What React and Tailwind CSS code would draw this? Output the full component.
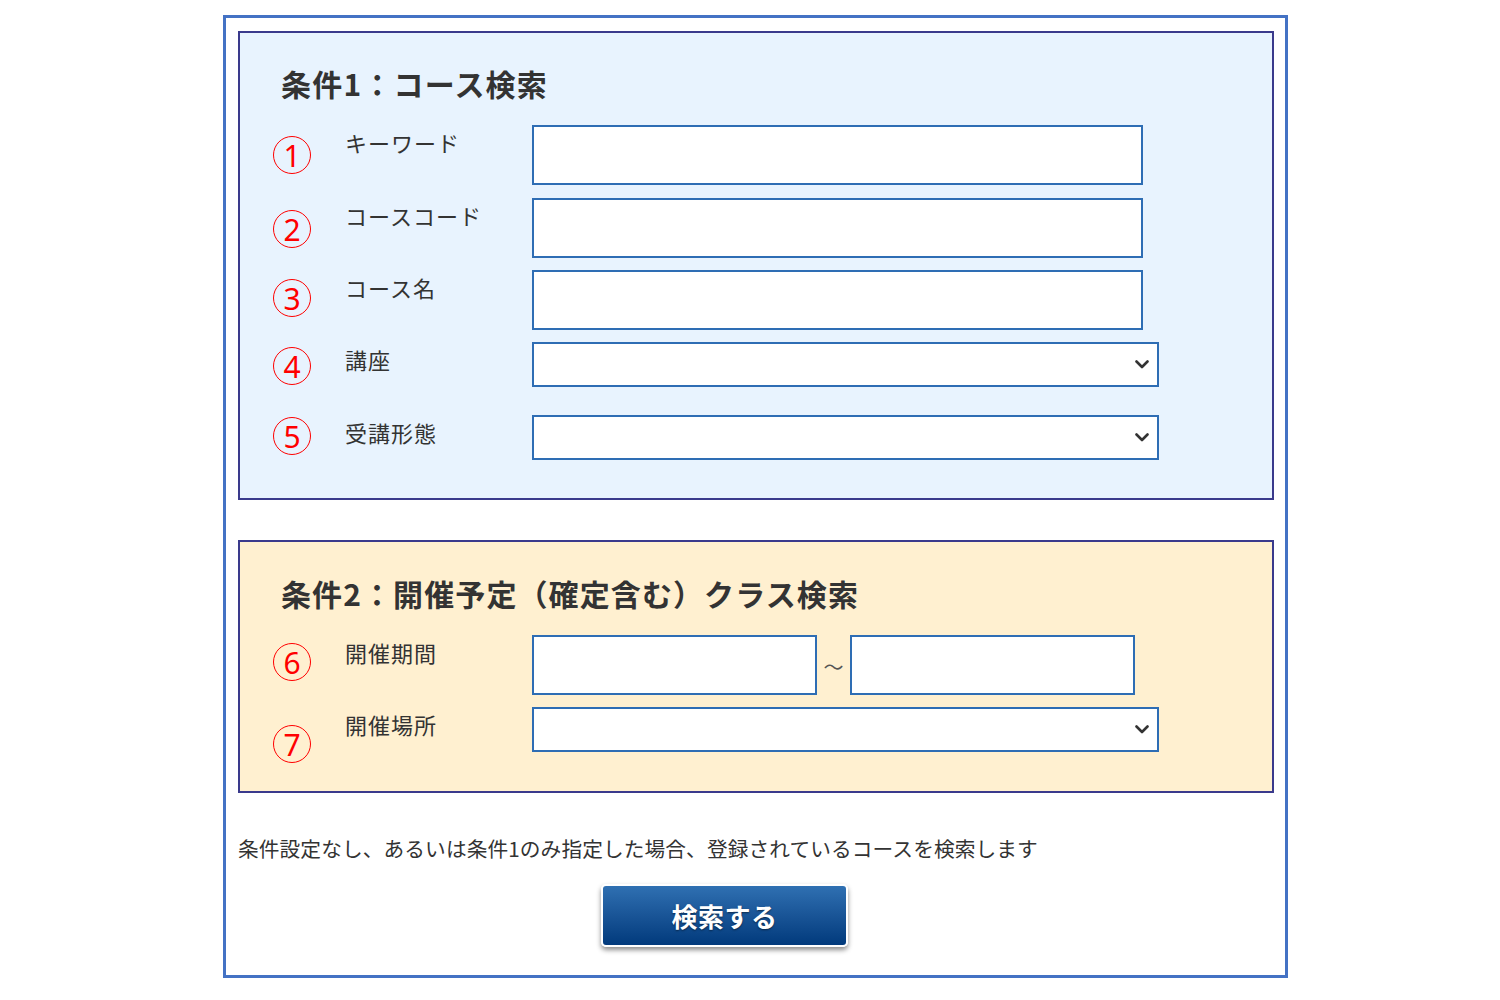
import React from "react";

const FONT = "font-['Noto_Sans_CJK_JP','Noto_Sans',sans-serif]";

function Circle({ n, className }) {
  return (
    <div
      className={
        "w-[38px] h-[38px] rounded-full border-[1.6px] border-[#ff0000] flex items-center justify-center text-[#ff0000] text-[30px] leading-none font-['Noto_Sans',sans-serif] font-normal " +
        className
      }
    >
      <span className="mt-[1px]">{n}</span>
    </div>
  );
}

function Chevron() {
  return (
    <svg width="14" height="9" viewBox="0 0 14 9" className="block">
      <path d="M1.5 1.5 L7 7 L12.5 1.5" fill="none" stroke="#333" strokeWidth="2.6" strokeLinecap="round" strokeLinejoin="round" />
    </svg>
  );
}

function Row({ n, label, circleClass, className, children }) {
  return (
    <div className={"flex h-[60px] " + className}>
      <div className="w-[72px] shrink-0">
        <Circle n={n} className={circleClass} />
      </div>
      <div className="w-[187px] shrink-0 pt-[6px] text-[22px] leading-[22px] tracking-[1px] text-[#333]">{label}</div>
      {children}
    </div>
  );
}

function TextBox({ w }) {
  return <input type="text" className={"h-[60px] border-2 border-[#2e6db4] bg-white outline-none " + w} />;
}

function SelectBox() {
  return (
    <div className="w-[627px] h-[45px] border-2 border-[#2e6db4] bg-white flex items-center justify-end pr-[8px]">
      <Chevron />
    </div>
  );
}

export default function App() {
  return (
    <div className={"min-h-[1000px] bg-white pt-[15px] " + FONT}>
      <div className="ml-[223px] w-[1065px] border-[3px] border-[#4472c4] pl-[12px] pr-[10px] pt-[13px] pb-[28px]">
        {/* Panel 1 */}
        <div className="w-[1036px] border-2 border-[#3a3a8c] bg-[#e8f3fe] pl-[33px] pt-[35px] pb-[23px]">
          <div className="pl-[8px] text-[30px] leading-[30px] font-bold tracking-[1.2px] text-[#333]">条件1：コース検索</div>
          <Row n="1" label="キーワード" circleClass="mt-[11px]" className="mt-[27px]">
            <TextBox w="w-[611px]" />
          </Row>
          <Row n="2" label="コースコード" circleClass="mt-[12px]" className="mt-[13px]">
            <TextBox w="w-[611px]" />
          </Row>
          <Row n="3" label="コース名" circleClass="mt-[9px]" className="mt-[12px]">
            <TextBox w="w-[611px]" />
          </Row>
          <Row n="4" label="講座" circleClass="mt-[5px]" className="mt-[12px]">
            <SelectBox />
          </Row>
          <Row n="5" label="受講形態" circleClass="mt-[2px]" className="mt-[13px]">
            <SelectBox />
          </Row>
        </div>

        {/* Panel 2 */}
        <div className="mt-[40px] w-[1036px] border-2 border-[#3a3a8c] bg-[#fff0d0] pl-[33px] pt-[36px] pb-[24px]">
          <div className="pl-[8px] text-[30px] leading-[30px] font-bold tracking-[1.1px] text-[#333]">条件2：開催予定（確定含む）クラス検索</div>
          <Row n="6" label="開催期間" circleClass="mt-[8px]" className="mt-[27px]">
            <div className="flex items-center">
              <TextBox w="w-[285px]" />
              <span className="w-[33px] text-center text-[20px] leading-none text-[#555] mt-[4px]">～</span>
              <TextBox w="w-[285px]" />
            </div>
          </Row>
          <Row n="7" label="開催場所" circleClass="mt-[18px]" className="mt-[12px]">
            <SelectBox />
          </Row>
        </div>

        <div className="mt-[45px] text-[20.7px] leading-[20px] tracking-[0.1px] text-[#333] whitespace-nowrap">
          条件設定なし、あるいは条件1のみ指定した場合、登録されているコースを検索します
        </div>

        <button
          type="button"
          className="mt-[26px] ml-[363px] w-[247px] h-[63px] rounded-[5px] border-2 border-white bg-gradient-to-b from-[#2f70b2] to-[#023a7c] shadow-[0_3px_5px_rgba(0,0,0,0.45)] text-white text-[26px] font-bold tracking-[0.5px] flex items-center justify-center [text-shadow:0_1px_2px_rgba(0,0,0,0.5)]"
        >
          検索する
        </button>
      </div>
    </div>
  );
}
